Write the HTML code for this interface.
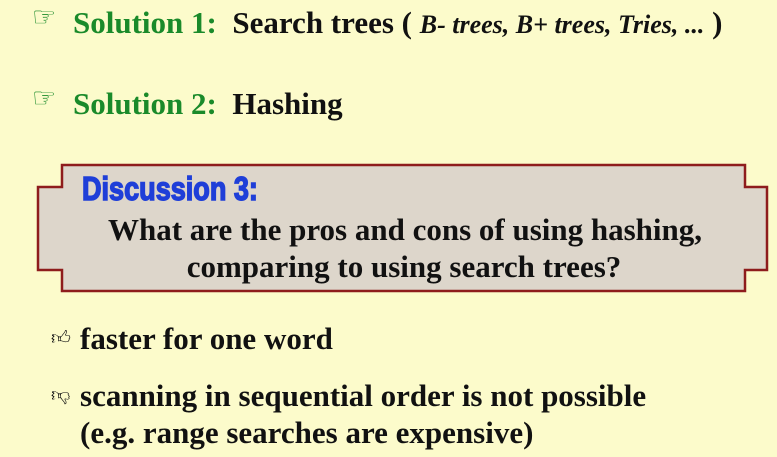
<!DOCTYPE html>
<html><head><meta charset="utf-8"><style>
html,body{margin:0;padding:0}
body{width:777px;height:457px;background:#fcfbcb;position:relative;overflow:hidden;font-family:"Liberation Serif",serif;font-weight:bold;color:#111}
.t{position:absolute;white-space:nowrap;line-height:1}
.g{color:#1a8a2a}
.i{font-style:italic;font-size:26px}
</style></head><body>
<div class="t" style="left:32px;top:4px;font-size:27px;color:#1a8a2a;font-weight:normal">☞</div>
<div class="t" style="left:73px;top:7px;font-size:31px"><span class="g">Solution 1:</span>&nbsp; Search trees <span>(</span> <span class="i">B- trees, B+ trees, Tries, ...</span> )</div>
<div class="t" style="left:32px;top:85px;font-size:27px;color:#1a8a2a;font-weight:normal">☞</div>
<div class="t" style="left:73px;top:88px;font-size:31px"><span class="g">Solution 2:</span>&nbsp; Hashing</div>
<svg style="position:absolute;left:0;top:0" width="777" height="457">
<polygon points="62,165 745,165 745,187 767,187 767,270 745,270 745,291 62,291 62,270 38,270 38,187 62,187" fill="#ddd6cb" stroke="#8e1c1c" stroke-width="2.5"/>
</svg>
<div class="t" style="left:82px;top:172px;font-family:'Liberation Sans',sans-serif;font-size:33px;color:#1f3fd8;transform:scaleX(0.82);transform-origin:left;-webkit-text-stroke:1.5px #1f3fd8">Discussion 3:</div>
<div class="t" style="left:0;width:810px;text-align:center;top:214px;font-size:31px">What are the pros and cons of using hashing,</div>
<div class="t" style="left:0;width:808px;text-align:center;top:251px;font-size:31px">comparing to using search trees?</div>
<div class="t" style="left:51px;top:329px;font-size:19px;font-weight:normal">👍︎</div>
<div class="t" style="left:80px;top:323px;font-size:31px">faster for one word</div>
<div class="t" style="left:51px;top:386px;font-size:19px;font-weight:normal">👎︎</div>
<div class="t" style="left:80px;top:380px;font-size:31px">scanning in sequential order is not possible</div>
<div class="t" style="left:80px;top:417px;font-size:31px">(e.g. range searches are expensive)</div>
</body></html>
